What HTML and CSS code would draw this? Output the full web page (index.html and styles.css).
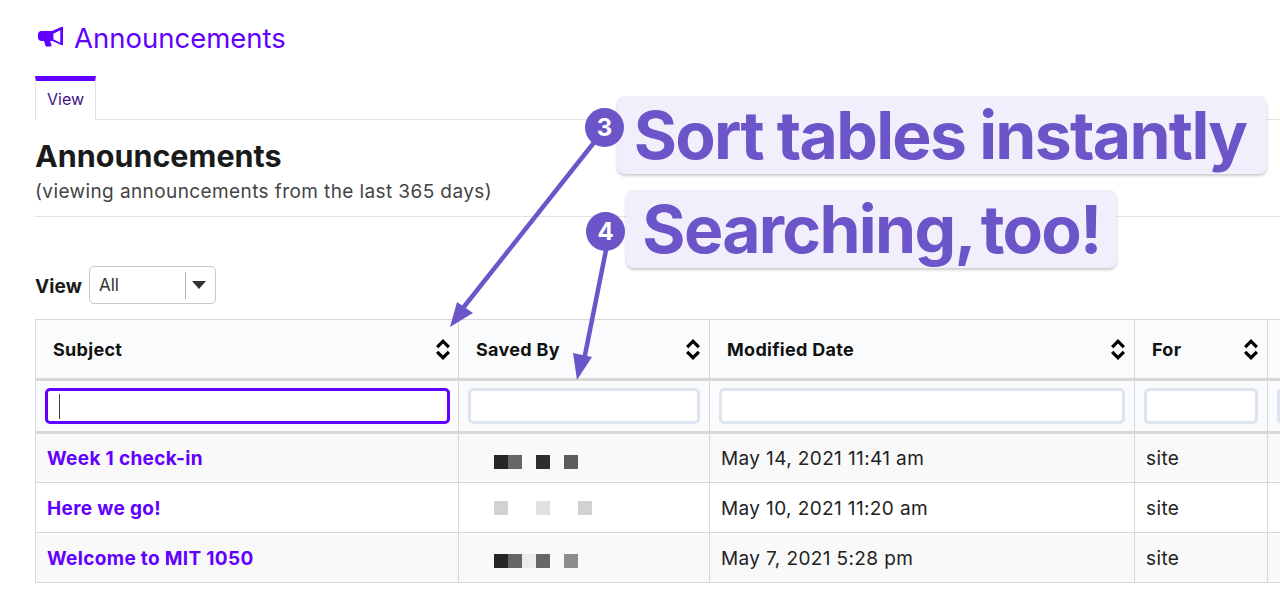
FILE: index.html
```html
<!DOCTYPE html>
<html lang="en">
<head>
<meta charset="utf-8">
<title>Announcements</title>
<link rel="stylesheet" href="styles.css">
</head>
<body>
<main class="page">
  <h1 class="site-title">
    <svg class="title-icon" viewBox="0 0 26 22" aria-hidden="true"><path fill-rule="evenodd" d="M24.600 .4c.8-.3 1.400.2 1.400 1v17.200c0 .9-.7 1.300-1.400 1L15 15.200H12.700l1.300 4.300c.2.8-.3 1.500-1.100 1.500H9c-.6 0-1-.3-1.200-.9L6.200 15.200H3.500C1.600 15.200 0 13.600 0 11.700V8.300C0 6.400 1.600 4.800 3.500 4.800H14.600ZM23.200 4l-7.200 3.600v5.800l7.200 3.600Z"/></svg>
    <span>Announcements</span>
  </h1>
  <nav class="tabs"><a class="tab">View</a></nav>
  <header class="section-head">
    <h2>Announcements</h2>
    <p>(viewing announcements from the last 365 days)</p>
  </header>
  <div class="view-row">
    <label class="view-label">View</label>
    <div class="select"><span class="select-value">All</span><span class="select-sep"></span><span class="select-caret"></span></div>
  </div>
  <table class="grid">
    <colgroup><col class="c1"><col class="c2"><col class="c3"><col class="c4"><col class="c5"></colgroup>
    <thead>
      <tr class="head">
        <th><div class="th-in"><span>Subject</span><svg class="sort" viewBox="0 0 16 21"><path d="M8 0l7 7-2.300 2.300L8 4.600 3.300 9.300 1 7zM8 21l-7-7 2.300-2.300L8 16.400l4.700-4.700L15 14z"/></svg></div></th>
        <th><div class="th-in"><span>Saved By</span><svg class="sort" viewBox="0 0 16 21"><path d="M8 0l7 7-2.300 2.300L8 4.600 3.300 9.300 1 7zM8 21l-7-7 2.300-2.300L8 16.400l4.700-4.700L15 14z"/></svg></div></th>
        <th><div class="th-in"><span>Modified Date</span><svg class="sort" viewBox="0 0 16 21"><path d="M8 0l7 7-2.300 2.300L8 4.600 3.300 9.300 1 7zM8 21l-7-7 2.300-2.300L8 16.400l4.700-4.700L15 14z"/></svg></div></th>
        <th><div class="th-in"><span>For</span><svg class="sort" viewBox="0 0 16 21"><path d="M8 0l7 7-2.300 2.300L8 4.600 3.300 9.300 1 7zM8 21l-7-7 2.300-2.300L8 16.400l4.700-4.700L15 14z"/></svg></div></th>
        <th></th>
      </tr>
      <tr class="filters">
        <td><div class="field focus"><i class="cursor"></i></div></td>
        <td><div class="field"></div></td>
        <td><div class="field"></div></td>
        <td><div class="field"></div></td>
        <td><div class="field"></div></td>
      </tr>
    </thead>
    <tbody>
      <tr class="row">
        <td><a class="subject">Week 1 check-in</a></td>
        <td><div class="px-row r1"><i class="px p1"></i><i class="px p2"></i><i class="px gap"></i><i class="px p1b"></i><i class="px gap"></i><i class="px p3"></i></div></td>
        <td>May 14, 2021 11:41 am</td><td>site</td><td></td>
      </tr>
      <tr class="row">
        <td><a class="subject">Here we go!</a></td>
        <td><div class="px-row r2"><i class="px l1"></i><i class="px gap"></i><i class="px gap"></i><i class="px l2"></i><i class="px gap"></i><i class="px gap"></i><i class="px l1"></i></div></td>
        <td>May 10, 2021 11:20 am</td><td>site</td><td></td>
      </tr>
      <tr class="row">
        <td><a class="subject">Welcome to MIT 1050</a></td>
        <td><div class="px-row r3"><i class="px p1"></i><i class="px p2"></i><i class="px l3"></i><i class="px p2"></i><i class="px gap"></i><i class="px p4"></i></div></td>
        <td>May 7, 2021 5:28 pm</td><td>site</td><td></td>
      </tr>
    </tbody>
  </table>
</main>

<svg class="arrows" viewBox="0 0 1280 610" aria-hidden="true">
  <path class="arrow-line" d="M596 140L463 308"/>
  <path class="arrow-head" d="M450 327L457 302 473 313Z"/>
  <path class="arrow-line" d="M607 245L584 360"/>
  <path class="arrow-head" d="M577 380L573 353 592 357Z"/>
</svg>
<div class="note note-sort">Sort tables instantly</div>
<div class="note note-search">Searching, too!</div>
<div class="badge badge-3">3</div>
<div class="badge badge-4">4</div>
</body>
</html>
```
FILE: styles.css
```css
* { box-sizing: border-box; }
html, body { margin: 0; height: 610px; overflow: hidden; background: #fff; }
body { font-family: Inter, "Liberation Sans", sans-serif; color: #1a1a1a; position: relative; }
.page { padding: 0 0 0 35px; width: 1280px; }

.site-title { margin: 0; height: 76px; display: flex; align-items: flex-start; padding: 20px 0 0 3px; font-size: 27.500px; line-height: 36px; font-weight: 400; color: #6200ff; }
.title-icon { width: 25px; height: 22px; fill: #6200ff; margin: 6px 11px 0 0; flex: none; }

.tabs { height: 44px; border-bottom: 1px solid #e1e1e1; display: flex; }
.tab { width: 61px; height: 44px; border-top: 5px solid #6200ff; border-left: 1px solid #e1e1e1; border-right: 1px solid #e1e1e1; background: #fff; color: #3f0f8c; font-size: 16px; line-height: 36px; text-align: center; }

.section-head { height: 97px; border-bottom: 1px solid #e1e1e1; padding-top: 18px; }
.section-head h2 { margin: 0; font-size: 30.500px; line-height: 36px; font-weight: 700; color: #1a1a1a; }
.section-head p { margin: 0; font-size: 19px; line-height: 34px; letter-spacing: .4px; color: #444; padding-top: 1px; }

.view-row { display: flex; align-items: center; height: 38px; margin-top: 49px; }
.view-label { font-size: 19px; font-weight: 700; width: 54px; letter-spacing: .1px; padding-top: 2px; }
.select { width: 127px; height: 38px; border: 1px solid #c9c9c9; border-radius: 5px; display: flex; align-items: center; padding-left: 9px; background: #fff; }
.select-value { font-size: 17px; color: #333; width: 86px; }
.select-sep { width: 1px; height: 27px; background: #b5b5b5; }
.select-caret { width: 0; height: 0; margin-left: 6px; border-left: 7px solid transparent; border-right: 7px solid transparent; border-top: 8px solid #333; }

.grid { margin-top: 15px; width: 1300px; table-layout: fixed; border-collapse: collapse; }
.c1 { width: 423px; } .c2 { width: 251px; } .c3 { width: 425px; } .c4 { width: 133px; } .c5 { width: 68px; }
.grid th, .grid td { border: 1px solid #d8d8d8; padding: 0; }
.head th { height: 60px; background: #fafbfd; border-bottom-width: 3px; text-align: left; padding: 0 8px 0 17px; font-size: 18px; font-weight: 700; color: #111; }
.head th:first-child { padding-right: 7px; }
.th-in { display: flex; align-items: center; justify-content: space-between; letter-spacing: .3px; }
.sort { width: 16px; height: 21px; fill: #000; flex: none; margin-top: 1px; }
.filters td { height: 53px; background: #fafbfd; padding: 0 9px 1px; border-bottom-width: 3px; }
.filters td:first-child { padding-right: 8px; }
.field { height: 36px; background: #fff; border: 3px solid #dfe5f0; border-radius: 5px; position: relative; }
.field.focus { border-color: #6200ff; }
.cursor { position: absolute; left: 11px; top: 3px; width: 1px; height: 25px; background: #444; }
.row td { height: 50px; font-size: 19px; color: #222; padding-left: 11px; padding-top: 1px; letter-spacing: .38px; }
.row:nth-child(odd) td { background: #f9f9f9; }
.subject { font-weight: 700; color: #6200ff; letter-spacing: .33px; }
.px-row { display: flex; padding-left: 24px; }
.r1 { padding-top: 7px; } .r2 { padding-top: 0; } .r3 { padding-top: 5px; }
.px { display: block; width: 14px; height: 14px; }
.p1 { background: #262626; } .p2 { background: #666; } .p1b { background: #2e2e2e; } .p3 { background: #5c5c5c; } .p4 { background: #8c8c8c; }
.l1 { background: #d2d2d2; } .l2 { background: #e0e0e0; } .l3 { background: #ececec; }

.arrows { position: absolute; left: 0; top: 0; width: 1280px; height: 610px; pointer-events: none; }
.arrow-line { stroke: #6c55c9; stroke-width: 4.500px; fill: none; }
.arrow-head { fill: #6c55c9; }
.note { position: absolute; background: #f1effb; border-radius: 8px; box-shadow: 0 2px 3px rgba(0,0,0,.2); color: #6c55c9; font-weight: 700; font-size: 66px; line-height: 78px; height: 78px; white-space: nowrap; text-align: center; letter-spacing: -1.700px; }
.note-sort { left: 617px; top: 96px; width: 650px; padding-right: 4px; }
.note-search { left: 626px; top: 190px; width: 491px; word-spacing: -6px; }
.badge { position: absolute; width: 39px; height: 39px; border-radius: 50%; background: #6c55c9; color: #fff; font-weight: 700; font-size: 24px; line-height: 39px; text-align: center; }
.badge-3 { left: 585px; top: 108px; }
.badge-4 { left: 586px; top: 212px; }
```
